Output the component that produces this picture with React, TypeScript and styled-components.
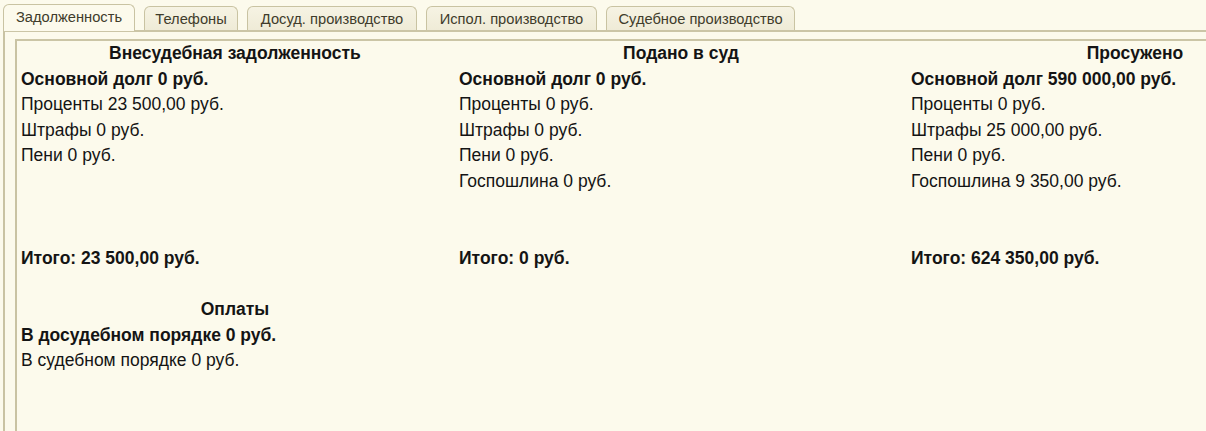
import React from "react";
import styled, { createGlobalStyle } from "styled-components";

const GlobalStyle = createGlobalStyle`
  html, body {
    margin: 0;
    padding: 0;
    background: #fcfaec;
  }
  body {
    font-family: "Liberation Sans", Arial, sans-serif;
    color: #141414;
  }
`;

const Screen = styled.div`
  width: 1206px;
  height: 431px;
  overflow: hidden;
  background: #fcfaec;
  display: flex;
  flex-direction: column;
`;

const TabBar = styled.div`
  display: flex;
  align-items: flex-end;
  padding: 4px 0 0 3px;
  gap: 9px;
  height: 26px;
  position: relative;
  z-index: 1;
`;

const Tab = styled.div<{ $active?: boolean; $w: number }>`
  box-sizing: border-box;
  width: ${(p) => p.$w}px;
  height: ${(p) => (p.$active ? 27 : 24)}px;
  margin-bottom: ${(p) => (p.$active ? -1 : 0)}px;
  display: flex;
  align-items: center;
  justify-content: center;
  padding-top: ${(p) => (p.$active ? 0 : 1)}px;
  padding-bottom: ${(p) => (p.$active ? 3 : 0)}px;
  border: 1px solid #c9c3a2;
  border-bottom: none;
  border-radius: 6px 6px 0 0;
  background: ${(p) =>
    p.$active ? "#fcfaec" : "linear-gradient(#f6f3e3, #efebd7)"};
  font-size: 14.7px;
  color: #403c2b;
  white-space: nowrap;
`;

const Panel = styled.div`
  flex: 1;
  margin-left: 3px;
  width: 1300px;
  border-top: 2px solid #cbc5a6;
  border-left: 2px solid #c9c3a3;
  padding: 7px 0 0 10px;
  display: flex;
`;

const Frame = styled.div`
  flex: 1;
  border-top: 2px solid #cbc5a6;
  border-left: 2px solid #c9c3a3;
  padding: 0 0 0 4px;
  font-size: 17.5px;
  line-height: 25.6px;
`;

const Columns = styled.div`
  display: grid;
  grid-template-columns: 438px 452px 452px;
`;

const Column = styled.div`
  display: flex;
  flex-direction: column;
`;

const Title = styled.div<{ $w: number }>`
  width: ${(p) => p.$w}px;
  text-align: center;
  font-weight: bold;
  white-space: nowrap;
`;

const Items = styled.div`
  height: ${25.6 * 7}px;
  display: flex;
  flex-direction: column;
`;

const Line = styled.div<{ $bold?: boolean }>`
  font-weight: ${(p) => (p.$bold ? "bold" : "normal")};
  white-space: nowrap;
`;

const Payments = styled.div`
  margin-top: 25.6px;
  display: flex;
  flex-direction: column;
`;

type Col = { title: string; w: number; main: string; items: string[]; total: string };

const cols: Col[] = [
  {
    title: "Внесудебная задолженность",
    w: 428,
    main: "Основной долг 0 руб.",
    items: ["Проценты 23 500,00 руб.", "Штрафы 0 руб.", "Пени 0 руб."],
    total: "Итого: 23 500,00 руб.",
  },
  {
    title: "Подано в суд",
    w: 444,
    main: "Основной долг 0 руб.",
    items: ["Проценты 0 руб.", "Штрафы 0 руб.", "Пени 0 руб.", "Госпошлина 0 руб."],
    total: "Итого: 0 руб.",
  },
  {
    title: "Просужено",
    w: 448,
    main: "Основной долг 590 000,00 руб.",
    items: [
      "Проценты 0 руб.",
      "Штрафы 25 000,00 руб.",
      "Пени 0 руб.",
      "Госпошлина 9 350,00 руб.",
    ],
    total: "Итого: 624 350,00 руб.",
  },
];

const tabs = [
  { label: "Задолженность", w: 132, active: true },
  { label: "Телефоны", w: 94 },
  { label: "Досуд. производство", w: 170 },
  { label: "Испол. производство", w: 171 },
  { label: "Судебное производство", w: 189 },
];

export default function App() {
  return (
    <>
      <GlobalStyle />
      <Screen>
        <TabBar>
          {tabs.map((t) => (
            <Tab key={t.label} $active={t.active} $w={t.w}>
              {t.label}
            </Tab>
          ))}
        </TabBar>
        <Panel>
          <Frame>
            <Columns>
              {cols.map((c) => (
                <Column key={c.title}>
                  <Title $w={c.w}>{c.title}</Title>
                  <Items>
                    <Line $bold>{c.main}</Line>
                    {c.items.map((i) => (
                      <Line key={i}>{i}</Line>
                    ))}
                  </Items>
                  <Line $bold>{c.total}</Line>
                </Column>
              ))}
            </Columns>
            <Payments>
              <Title $w={428}>Оплаты</Title>
              <Line $bold>В досудебном порядке 0 руб.</Line>
              <Line>В судебном порядке 0 руб.</Line>
            </Payments>
          </Frame>
        </Panel>
      </Screen>
    </>
  );
}
